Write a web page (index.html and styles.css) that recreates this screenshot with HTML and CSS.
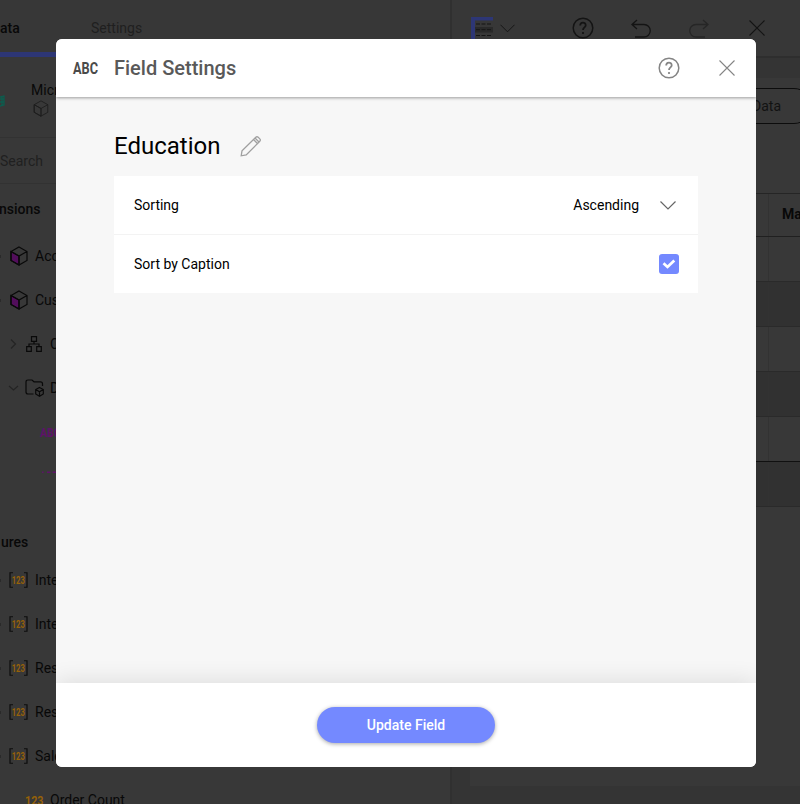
FILE: index.html
```html
<!DOCTYPE html>
<html lang="en">
<head>
<meta charset="utf-8">
<title>Field Settings</title>
<link rel="stylesheet" href="styles.css">
</head>
<body>
<svg width="0" height="0" class="defs">
  <symbol id="cube" viewBox="0 0 18 20"><path class="cube-face" d="M1 5.500 9 10v9L1 14.500z"/><path d="M9 1l8 4.500v9L9 19l-8-4.500v-9zM1 5.500 9 10l8-4.500M9 10v9" fill="none"/></symbol>
  <symbol id="help" viewBox="0 0 22 22"><circle cx="11" cy="11" r="9.800" fill="none" stroke-width="1.500"/><path d="M8.200 8.500C8.200 4.700 13.700 4.800 13.700 8.200 13.700 10.500 11 10.300 11 13" fill="none" stroke-width="1.800"/><circle cx="11" cy="16" r=".7"/></symbol>
  <symbol id="close" viewBox="0 0 16 16"><path d="M.5.5l15 15M15.500.5l-15 15" fill="none"/></symbol>
  <symbol id="down" viewBox="0 0 16 9"><path d="M.5.5 8 8 15.500.5" fill="none"/></symbol>
  <symbol id="undo" viewBox="0 0 20 20"><path d="M6 1 1 5.500l5 4.500M1 5.500h12a6 6 0 0 1 0 12.500H4" fill="none"/></symbol>
  <symbol id="num" viewBox="0 0 19 16"><path d="M4 .75H1v14.500h3M15 .75h3v14.500h-3" fill="none" stroke="#0c0c0c" stroke-width="1.200"/><text x="2.700" y="11.800" textLength="13.300" lengthAdjust="spacingAndGlyphs" class="num-text">123</text></symbol>
</svg>
<div class="app">
  <aside class="side">
    <nav class="tabs"><div class="tab tab-on"><span>ata</span></div><div class="tab tab-off">Settings</div></nav>
    <div class="source">
      <svg class="logo" width="6" height="12" viewBox="0 0 6 12"><path d="M0 2l4-1v9L0 11M0 4h4M0 7h4M2 1v10" fill="none" stroke="#0d5c4e" stroke-width="1.300"/></svg>
      <div class="source-text"><span>Microsoft</span><svg class="thin" width="16" height="17"><use href="#cube"/></svg></div>
    </div>
    <div class="search">Search</div>
    <div class="heading dims"><span>nsions</span></div>
    <div class="row"><i class="nub"></i><svg class="cube" width="18" height="20"><use href="#cube"/></svg><span>Account</span></div>
    <div class="row"><i class="nub"></i><svg class="cube" width="18" height="20"><use href="#cube"/></svg><span>Customer</span></div>
    <div class="row nested">
      <svg width="11" height="10" viewBox="0 0 11 10"><path class="arrow" d="M3 .5 7.500 5 3 9.500"/></svg>
      <svg width="16" height="16" viewBox="0 0 16 16" class="tree"><path d="M5.500.7h5v4.600h-5zM.7 10.700h4.600v4.600H.7zM10.700 10.700h4.600v4.600h-4.600zM8 5.300V8M3 10.700V8h10v2.700"/></svg><span>Customer</span></div>
    <div class="row nested">
      <svg width="11" height="10" viewBox="0 0 11 10"><path class="arrow" d="M1 3l4.500 4L10 3"/></svg>
      <svg width="19" height="18" viewBox="0 0 19 18" class="tree folder"><path d="M8.500 15H3Q1 15 1 13V3Q1 1 3 1h4l2 1.800h6.500q2 0 2 2V7"/><path d="M14.500 8.500l3.800 2v4.500l-3.800 2.300-3.800-2.300v-4.500zM10.700 10.500l3.800 2.200 3.800-2.200M14.500 12.700v4.500"/></svg><span>Demographic</span></div>
    <div class="row leaf"><svg width="26" height="14"><text x="0" y="11.500" textLength="20.500" lengthAdjust="spacingAndGlyphs" class="abc">ABC</text></svg></div>
    <div class="cut"><svg width="16" height="2" viewBox="0 0 16 2"><path d="M2 1.200h1.500M7 1.200h3.500M12.500 1.200H16" stroke="#5e1269" stroke-width="1.500"/></svg></div>
    <div class="heading meas"><span>ures</span></div>
    <div class="row"><i class="nub"></i><svg width="19" height="16"><use href="#num"/></svg><span>Internet</span></div>
    <div class="row"><i class="nub"></i><svg width="19" height="16"><use href="#num"/></svg><span>Internet</span></div>
    <div class="row"><i class="nub"></i><svg width="19" height="16"><use href="#num"/></svg><span>Reseller</span></div>
    <div class="row"><i class="nub"></i><svg width="19" height="16"><use href="#num"/></svg><span>Reseller</span></div>
    <div class="row"><i class="nub"></i><svg width="19" height="16"><use href="#num"/></svg><span>Sales</span></div>
    <div class="row order"><svg width="19" height="12"><text x="0" y="11" textLength="18.500" lengthAdjust="spacingAndGlyphs" class="num-text big">123</text></svg><span>Order Count</span></div>
  </aside>
  <main class="main">
    <header class="toolbar">
      <svg class="grid" width="22" height="23" viewBox="0 0 22 23"><path d="M0 0h22v3.500H4V23H0z" fill="#2d3675"/><path d="M4 10h18v5.500H4z" fill="#292929"/><path d="M5 7h16M5 12.700h16M5 18.500h16" stroke="#151515" stroke-width="1" stroke-dasharray="4 1.500"/></svg>
      <svg class="t-down" width="15" height="9"><use href="#down"/></svg>
      <svg class="t-help" width="22" height="22"><use href="#help"/></svg>
      <svg class="t-undo" width="20" height="20"><use href="#undo"/></svg>
      <svg class="t-redo" width="20" height="20"><use href="#undo"/></svg>
      <svg class="t-close" width="16" height="16"><use href="#close"/></svg>
    </header>
    <section class="canvas">
      <div class="data-button">Data</div>
      <div class="table">
        <div class="tr th"><b></b><span>Ma</span></div>
        <div class="tr"><b></b></div>
        <div class="tr alt"><b></b></div>
        <div class="tr"><b></b></div>
        <div class="tr alt"><b></b></div>
        <div class="tr strong"><b></b></div>
        <div class="tr alt"><b></b></div>
      </div>
    </section>
  </main>
</div>
<div class="dialog">
  <header class="dialog-head">
    <svg width="26" height="16"><text x="0" y="14" textLength="25" lengthAdjust="spacingAndGlyphs" class="abc dark">ABC</text></svg>
    <h1>Field Settings</h1>
    <svg class="d-help" width="22" height="22"><use href="#help"/></svg>
    <svg class="d-close" width="16" height="16"><use href="#close"/></svg>
  </header>
  <div class="dialog-body">
    <div class="title"><h2>Education</h2>
      <svg width="22" height="22" viewBox="0 0 22 22" class="pencil"><path d="M1.200 20.800l.8-5L15.800 2.300q1.200-1.200 2.400 0l1.600 1.600q1.200 1.200 0 2.400L6.200 20zM13.500 4.500l4.200 4.200M15 3l4.200 4.200"/></svg></div>
    <div class="card">
      <div class="option"><span>Sorting</span><span class="value">Ascending</span><svg class="o-down" width="16" height="9"><use href="#down"/></svg></div>
      <div class="option"><span>Sort by Caption</span><div class="check"><svg width="14" height="10" viewBox="0 0 14 10"><path d="M1.500 4.300 5.500 8 12.300 1.500" fill="none" stroke="#fff" stroke-width="2.700"/></svg></div></div>
    </div>
  </div>
  <footer class="dialog-foot"><button>Update Field</button></footer>
</div>
</body>
</html>
```
FILE: styles.css
```css
* { box-sizing: border-box; }
body { margin: 0; width: 800px; height: 804px; overflow: hidden; position: relative; background: #343434; font: 14px/20px Roboto, "Liberation Sans", sans-serif; color: #080808; }
.defs { position: absolute; }
svg { flex: none; overflow: visible; }
.app { display: flex; height: 804px; overflow: hidden; }
.side { width: 450px; height: 804px; overflow: hidden; flex: none; background: #383838; }
.tabs { display: flex; height: 57px; background: #373737; }
.tab { height: 57px; padding-top: 18px; }
.tab-on { width: 70px; border-bottom: 5px solid #2d3675; font-weight: 500; }
.tab-on span, .heading span { display: block; white-space: nowrap; }
.tab-off { padding-left: 21px; color: #1f1f1f; }
.source { display: flex; height: 81px; border-bottom: 1px solid #323232; }
.logo { margin: 38px 25px 0 0; }
.source-text { display: flex; flex-direction: column; padding-top: 23px; line-height: 20px; }
.thin { margin-left: 2px; fill: none; stroke: #1c1c1c; stroke-width: 1; }
.search { height: 46px; padding-top: 13px; border-bottom: 1px solid #323232; color: #202020; }
.heading { font-weight: 500; }
.dims { height: 50px; padding-top: 15px; }
.dims span { margin-left: -1px; }
.meas { height: 84px; padding-top: 58px; padding-left: 1px; }
.row { height: 44px; display: flex; align-items: center; white-space: nowrap; }
.row > span { margin-left: 7px; }
.nub { width: 9px; height: 3px; flex: none; background: linear-gradient(90deg, #2a2a2a 1px, transparent 1px); }
.cube { margin-left: 1px; stroke: #090909; stroke-width: 1.2; fill: #520e5b; }
.nested { padding-left: 8px; }
.nested svg + svg { margin-left: 7px; }
.nested svg + svg.folder { margin-left: 6px; }
.nested > span { margin-left: 8px; }
.nested .folder + span { margin-left: 6px; }
.arrow { fill: none; stroke: #242424; stroke-width: 1.2; }
.tree { fill: none; stroke: #090909; stroke-width: 1.2; }
.leaf { padding-left: 40px; }
.cut { height: 20px; padding: 17px 0 0 40px; }
.cut svg { display: block; }
.abc { font: 700 13px Roboto, sans-serif; fill: #5e1269; }
.abc.dark { font-size: 17px; fill: #4a4a4a; }
.num-text { font: 700 11px Roboto, sans-serif; fill: #966108; stroke: none; }
.num-text.big { font-size: 13px; }
.order { padding-left: 25px; }
.order > span { margin-left: 6px; }
.main { flex: 1; min-width: 0; display: flex; flex-direction: column; border-left: 2px solid #303030; }
.toolbar { height: 58px; flex: none; display: flex; align-items: flex-start; background: #373737; border-bottom: 2px solid #2e2e2e; stroke: #141414; }
.toolbar .grid { margin: 17px 0 0 19px; stroke: none; }
.t-down { margin: 24px 0 0 7px; }
.t-help { margin: 17px 0 0 57px; }
.t-undo { margin: 19px 0 0 37px; stroke-width: 1.3; }
.t-redo { margin: 19px 0 0 38px; stroke: #262626; stroke-width: 1.3; transform: scaleX(-1); }
.t-close { margin: 20px 0 0 40px; stroke-width: 1.1; }
.canvas { margin: 20px 0 18px 18px; flex: 1; background: #383838; overflow: hidden; }
.data-button { width: 160px; height: 36px; margin: 10px 0 0 182px; border: 1px solid #0c0c0c; border-radius: 18px; line-height: 34px; padding-left: 99px; color: #121212; }
.table { margin-top: 69px; border-top: 1px solid #252525; }
.tr { height: 45px; display: flex; border-bottom: 1px solid #2a2a2a; }
.tr b { width: 299px; flex: none; border-right: 1px solid #323232; }
.th { height: 43px; border-color: #202020; }
.th span { margin: 10px 0 0 13px; font-weight: 700; }
.alt { background: #313131; }
.strong { border-color: #101010; }
.dialog { position: absolute; left: 56px; top: 39px; width: 700px; height: 728px; border-radius: 6px; overflow: hidden; background: #f7f7f7; color: #000; display: flex; flex-direction: column; }
.dialog-head { height: 58px; flex: none; display: flex; align-items: center; padding: 0 21px 0 17px; background: #fff; box-shadow: 0 1px 3px rgba(0,0,0,.38); z-index: 1; }
h1, h2 { margin: 0; }
h1 { font-size: 20px; line-height: 28px; font-weight: 500; color: #595959; margin-left: 15px; flex: 1; }
.d-help { stroke: #858585; fill: #858585; margin-right: 39px; }
.d-close { stroke: #858585; stroke-width: 1.1; }
.dialog-body { flex: 1; padding: 31px 58px 0; }
.title { display: flex; height: 48px; }
h2 { font-size: 24px; line-height: 36px; font-weight: 400; }
.pencil { margin: 7px 0 0 20px; fill: none; stroke: #a0a0a0; stroke-width: 1.3; }
.card { background: #fff; }
.option { height: 58px; display: flex; align-items: center; padding: 0 19px 0 20px; }
.option + .option { height: 59px; border-top: 1px solid #f3f3f3; }
.value { margin-left: auto; }
.o-down { margin: 0 3px 0 21px; stroke: #666; stroke-width: 1.2; }
.check { width: 20px; height: 20px; border-radius: 3px; background: #7489ff; margin-left: auto; display: flex; align-items: center; justify-content: center; }
.dialog-foot { height: 84px; flex: none; background: #fff; display: flex; justify-content: center; padding-top: 24px; box-shadow: 0 -2px 22px rgba(0,0,0,.11); }
button { width: 178px; height: 36px; border: 0; border-radius: 18px; background: #7489ff; color: #fff; font: 500 14px Roboto, sans-serif; box-shadow: 0 1px 4px rgba(0,0,0,.35); }
```
